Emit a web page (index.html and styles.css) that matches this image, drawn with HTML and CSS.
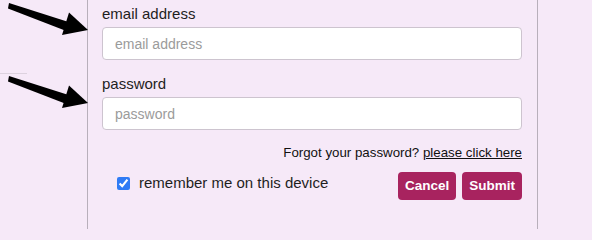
FILE: index.html
```html
<!DOCTYPE html>
<html>
<head>
<meta charset="utf-8">
<link rel="stylesheet" href="styles.css">
</head>
<body>
<div class="page">
  <div class="gutter">
    <svg class="arrows" width="90" height="229" viewBox="0 0 90 229">
      <line x1="0" y1="73.5" x2="27" y2="73.5" stroke="#ddd2df" stroke-width="1"/>
      <g fill="#000">
        <polygon points="9,3 67,21.5 65,30.5 8,8.5"/>
        <polygon points="69,12.5 88,30 62,35"/>
      </g>
      <g fill="#000" transform="translate(0,73)">
        <polygon points="9,3 67,21.5 65,30.5 8,8.5"/>
        <polygon points="69,12.5 88,30 62,35"/>
      </g>
    </svg>
  </div>
  <form class="panel">
    <div class="field">
      <label class="label" for="email">email address</label>
      <input class="input" id="email" type="text" placeholder="email address">
    </div>
    <div class="field">
      <label class="label" for="pw">password</label>
      <input class="input" id="pw" type="password" placeholder="password">
    </div>
    <p class="forgot">Forgot your password? <a href="#" class="link">please click here</a></p>
    <div class="actions">
      <label class="remember"><input class="check" type="checkbox" checked>remember me on this device</label>
      <div class="buttons">
        <button type="button" class="btn">Cancel</button>
        <button type="submit" class="btn">Submit</button>
      </div>
    </div>
  </form>
</div>
</body>
</html>
```
FILE: styles.css
```css
html, body {
  margin: 0;
  padding: 0;
  background: #f6e9f8;
  font-family: "Liberation Sans", Arial, Helvetica, sans-serif;
  color: #1e1e1e;
}
.page {
  display: flex;
  height: 229px;
  overflow: hidden;
}
.gutter {
  width: 87px;
  flex: none;
}
.arrows {
  display: block;
  position: relative;
  z-index: 1;
  overflow: visible;
}
.panel {
  box-sizing: border-box;
  width: 451px;
  height: 229px;
  flex: none;
  margin: 0;
  border-left: 1px solid #b8afbb;
  border-right: 1px solid #b8afbb;
  padding: 0 15px 0 14px;
}
.field {
  display: flex;
  flex-direction: column;
  margin-bottom: 15px;
}
.label {
  display: block;
  font-size: 15px;
  line-height: 17px;
  padding-top: 5px;
  margin-bottom: 5px;
  color: #1e1e1e;
}
.field + .field .label {
  padding-top: 0;
}
.input {
  box-sizing: border-box;
  width: 420px;
  height: 33px;
  margin: 0;
  border: 1px solid #cdc4cf;
  border-radius: 4px;
  background: #fff;
  padding: 0 12px;
  font-family: "Liberation Sans", Arial, sans-serif;
  font-size: 14px;
  color: #333;
  outline: none;
}
.input::placeholder {
  color: #9b9b9b;
}
.forgot {
  margin: 0;
  text-align: right;
  font-size: 13.3px;
  line-height: 16px;
  color: #111;
}
.link {
  color: #111;
  text-decoration: underline;
}
.actions {
  display: flex;
  justify-content: space-between;
  align-items: flex-start;
  margin-top: 11px;
}
.remember {
  display: flex;
  align-items: center;
  margin-top: 2px;
  padding-left: 15px;
  font-size: 15px;
  line-height: 18px;
  color: #1e1e1e;
}
.check {
  width: 13px;
  height: 13px;
  margin: 0 9px 0 0;
  accent-color: #2f7bf5;
}
.buttons {
  display: flex;
  gap: 6px;
}
.btn {
  box-sizing: border-box;
  height: 28px;
  margin: 0;
  padding: 0 7px;
  border: none;
  border-radius: 4px;
  background: #a8235f;
  color: #fff;
  font-family: "Liberation Sans", Arial, sans-serif;
  font-weight: bold;
  font-size: 13.5px;
  line-height: 28px;
}
```
